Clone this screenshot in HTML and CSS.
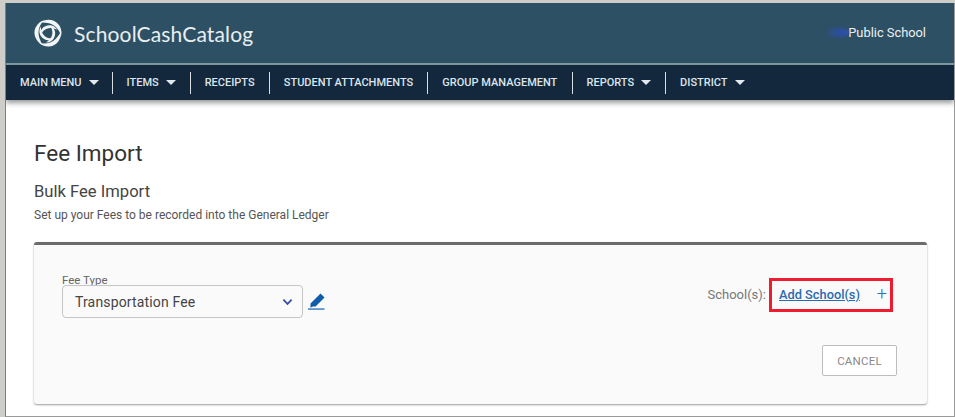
FILE: index.html
```html
<!DOCTYPE html>
<html lang="en">
<head>
<meta charset="utf-8">
<title>Fee Import</title>
<link rel="stylesheet" href="styles.css">
</head>
<body>
<div class="frame">
  <header class="brand-bar">
    <div class="brand">
      <svg class="logo" viewBox="0 0 28 28" aria-hidden="true">
        <defs>
          <g id="swirl">
            <path d="M6 3.500C11.500 -.6 20.500 -.4 25 6 27.400 9.500 27.900 13.500 27 17 25.800 11.500 21.500 6 15 4.300 11.800 3.500 8.800 3.300 6 3.500Z" fill="#f2f5f6"/>
            <path d="M6.500 16.500C5.800 11 9.500 6.500 15.300 6.300 18.800 6.200 21.800 8 23.200 11 20 9 16 8.500 12.800 9.700 10 10.800 7.800 13.300 6.500 16.500Z" fill="#f2f5f6"/>
          </g>
        </defs>
        <use href="#swirl"/>
        <use href="#swirl" transform="rotate(120 14 14)"/>
        <use href="#swirl" transform="rotate(240 14 14)"/>
      </svg>
      <span class="brand-name">SchoolCashCatalog</span>
    </div>
    <div class="school"><span class="smudge"></span><span>Public School</span></div>
  </header>
  <nav class="nav">
    <a class="nav-item has-caret">MAIN MENU</a>
    <a class="nav-item has-caret">ITEMS</a>
    <a class="nav-item">RECEIPTS</a>
    <a class="nav-item">STUDENT ATTACHMENTS</a>
    <a class="nav-item">GROUP MANAGEMENT</a>
    <a class="nav-item has-caret">REPORTS</a>
    <a class="nav-item has-caret">DISTRICT</a>
  </nav>
  <main class="content">
    <h1 class="title">Fee Import</h1>
    <h2 class="subtitle">Bulk Fee Import</h2>
    <p class="hint">Set up your Fees to be recorded into the General Ledger</p>
    <section class="card">
      <div class="card-row">
        <div class="field">
          <div class="field-label">Fee Type</div>
          <div class="field-line">
            <div class="select">
              <span>Transportation Fee</span>
              <svg class="chev" viewBox="0 0 12 8" aria-hidden="true"><path d="M1.500 1.500 6 6l4.500-4.500" fill="none" stroke="#3a4fa8" stroke-width="2"/></svg>
            </div>
            <svg class="pencil" viewBox="0 0 17 17" aria-hidden="true">
              <path d="M12.500 .5 16.500 4.500 7.500 13.500H4.800L2.500 14.800 2.500 10.500z" fill="#0f5cad"/>
              <rect x="0" y="15.300" width="16.500" height="1.500" fill="#3f7fc4"/>
            </svg>
          </div>
        </div>
        <div class="schools">
          <span class="schools-label">School(s):</span>
          <div class="add-box">
            <a class="add-link">Add School(s)</a>
            <span class="plus">+</span>
          </div>
        </div>
      </div>
      <div class="actions"><button class="cancel" type="button">CANCEL</button></div>
    </section>
  </main>
</div>
</body>
</html>
```
FILE: styles.css
```css
* { box-sizing: border-box; }
html, body { margin: 0; padding: 0; }
body {
  width: 955px;
  height: 417px;
  overflow: hidden;
  background: #cfcdc9;
  font-family: Roboto, "Liberation Sans", sans-serif;
  padding: 3px 0 0 5px;
}
.frame {
  height: 414px;
  background: #fff;
  border-left: 1px solid #77818c;
  border-right: 1px solid #9a9a9a;
  border-bottom: 1px solid #9a9a9a;
  overflow: hidden;
}
.brand-bar {
  height: 62px;
  background: #2e5064;
  border-bottom: 2px solid #7f9aa4;
  display: flex;
  justify-content: space-between;
  align-items: center;
  padding: 0 28px 0 28px;
}
.brand { display: flex; align-items: center; gap: 12px; }
.logo { width: 28px; height: 28px; display: block; }
.brand-name {
  font-family: Lato, "Open Sans", sans-serif;
  font-size: 21px;
  letter-spacing: .15px;
  color: #e9eef0;
}
.school {
  display: flex;
  align-items: center;
  font-size: 12.850px;
  color: #edf1f3;
  margin-top: -1px;
}
.smudge {
  width: 26px;
  height: 9px;
  border-radius: 50%;
  margin-right: -1px;
  background: linear-gradient(90deg, rgba(46,80,100,0), #2a4fa8 75%, #2d56b8);
  filter: blur(1.500px);
}
.nav {
  height: 35px;
  background: #13283c;
  display: flex;
  align-items: center;
  box-shadow: 0 3px 5px rgba(0,0,0,.4);
}
.nav-item {
  height: 22px;
  display: flex;
  align-items: center;
  padding: 0 14.200px 0 14px;
  font-size: 11px;
  font-weight: 500;
  color: #dce5ec;
  border-left: 1px solid #d8dee2;
}
.nav-item:first-child { border-left: 0; padding-right: 13px; }
.has-caret { padding-right: 14px; }
.has-caret::after {
  content: "";
  margin-left: 7px;
  border-left: 5px solid transparent;
  border-right: 5px solid transparent;
  border-top: 5px solid #e4e9ed;
}
.content { padding: 0 28px; }
.title {
  margin: 39px 0 0;
  font-size: 22.500px;
  line-height: 28px;
  font-weight: 400;
  color: #333;
}
.subtitle {
  margin: 15px 0 0;
  font-size: 16.600px;
  line-height: 20px;
  font-weight: 400;
  color: #444;
}
.hint {
  margin: 6px 0 0;
  font-size: 12px;
  line-height: 14px;
  color: #555;
}
.card {
  margin: 20px 0 0;
  width: 893px;
  height: 162px;
  background: #fafafa;
  border-top: 3px solid #6b6b6b;
  border-radius: 3px;
  box-shadow: 0 1px 2px rgba(0,0,0,.4);
  padding: 30px 30px 0 28px;
}
.card-row { display: flex; justify-content: space-between; }
.field-label {
  font-size: 11.500px;
  line-height: 10px;
  color: #666;
}
.field-line { display: flex; align-items: center; gap: 5px; }
.select {
  width: 241px;
  height: 33px;
  background: #fafafa;
  border: 1px solid #c4c4c4;
  border-radius: 4px;
  display: flex;
  align-items: center;
  justify-content: space-between;
  padding: 0 9px 0 12px;
  font-size: 14px;
  letter-spacing: .15px;
  color: #444;
}
.chev { width: 11px; height: 8px; }
.pencil { width: 17px; height: 17px; }
.schools { display: flex; align-items: center; margin-top: 3px; height: 34px; margin-right: 4px; }
.schools-label { font-size: 13px; color: #777; margin-right: 3px; padding-bottom: 2px; }
.add-box {
  width: 124px;
  height: 34px;
  border: 3px solid #ee1c2e;
  display: flex;
  align-items: center;
  justify-content: space-between;
  padding: 0 3px 2px 7px;
}
.add-link {
  font-size: 12.800px;
  font-weight: 500;
  color: #2a6ab0;
  text-decoration: underline;
}
.plus { font-size: 18px; line-height: 1; font-weight: 300; color: #2f72bb; }
.actions { display: flex; justify-content: flex-end; margin-top: 27px; }
.cancel {
  width: 75px;
  height: 31px;
  background: #fff;
  border: 1px solid #bdbdbd;
  border-radius: 2px;
  font-family: inherit;
  font-size: 11.500px;
  letter-spacing: .2px;
  color: #8a8a8a;
  padding: 0;
}
```
